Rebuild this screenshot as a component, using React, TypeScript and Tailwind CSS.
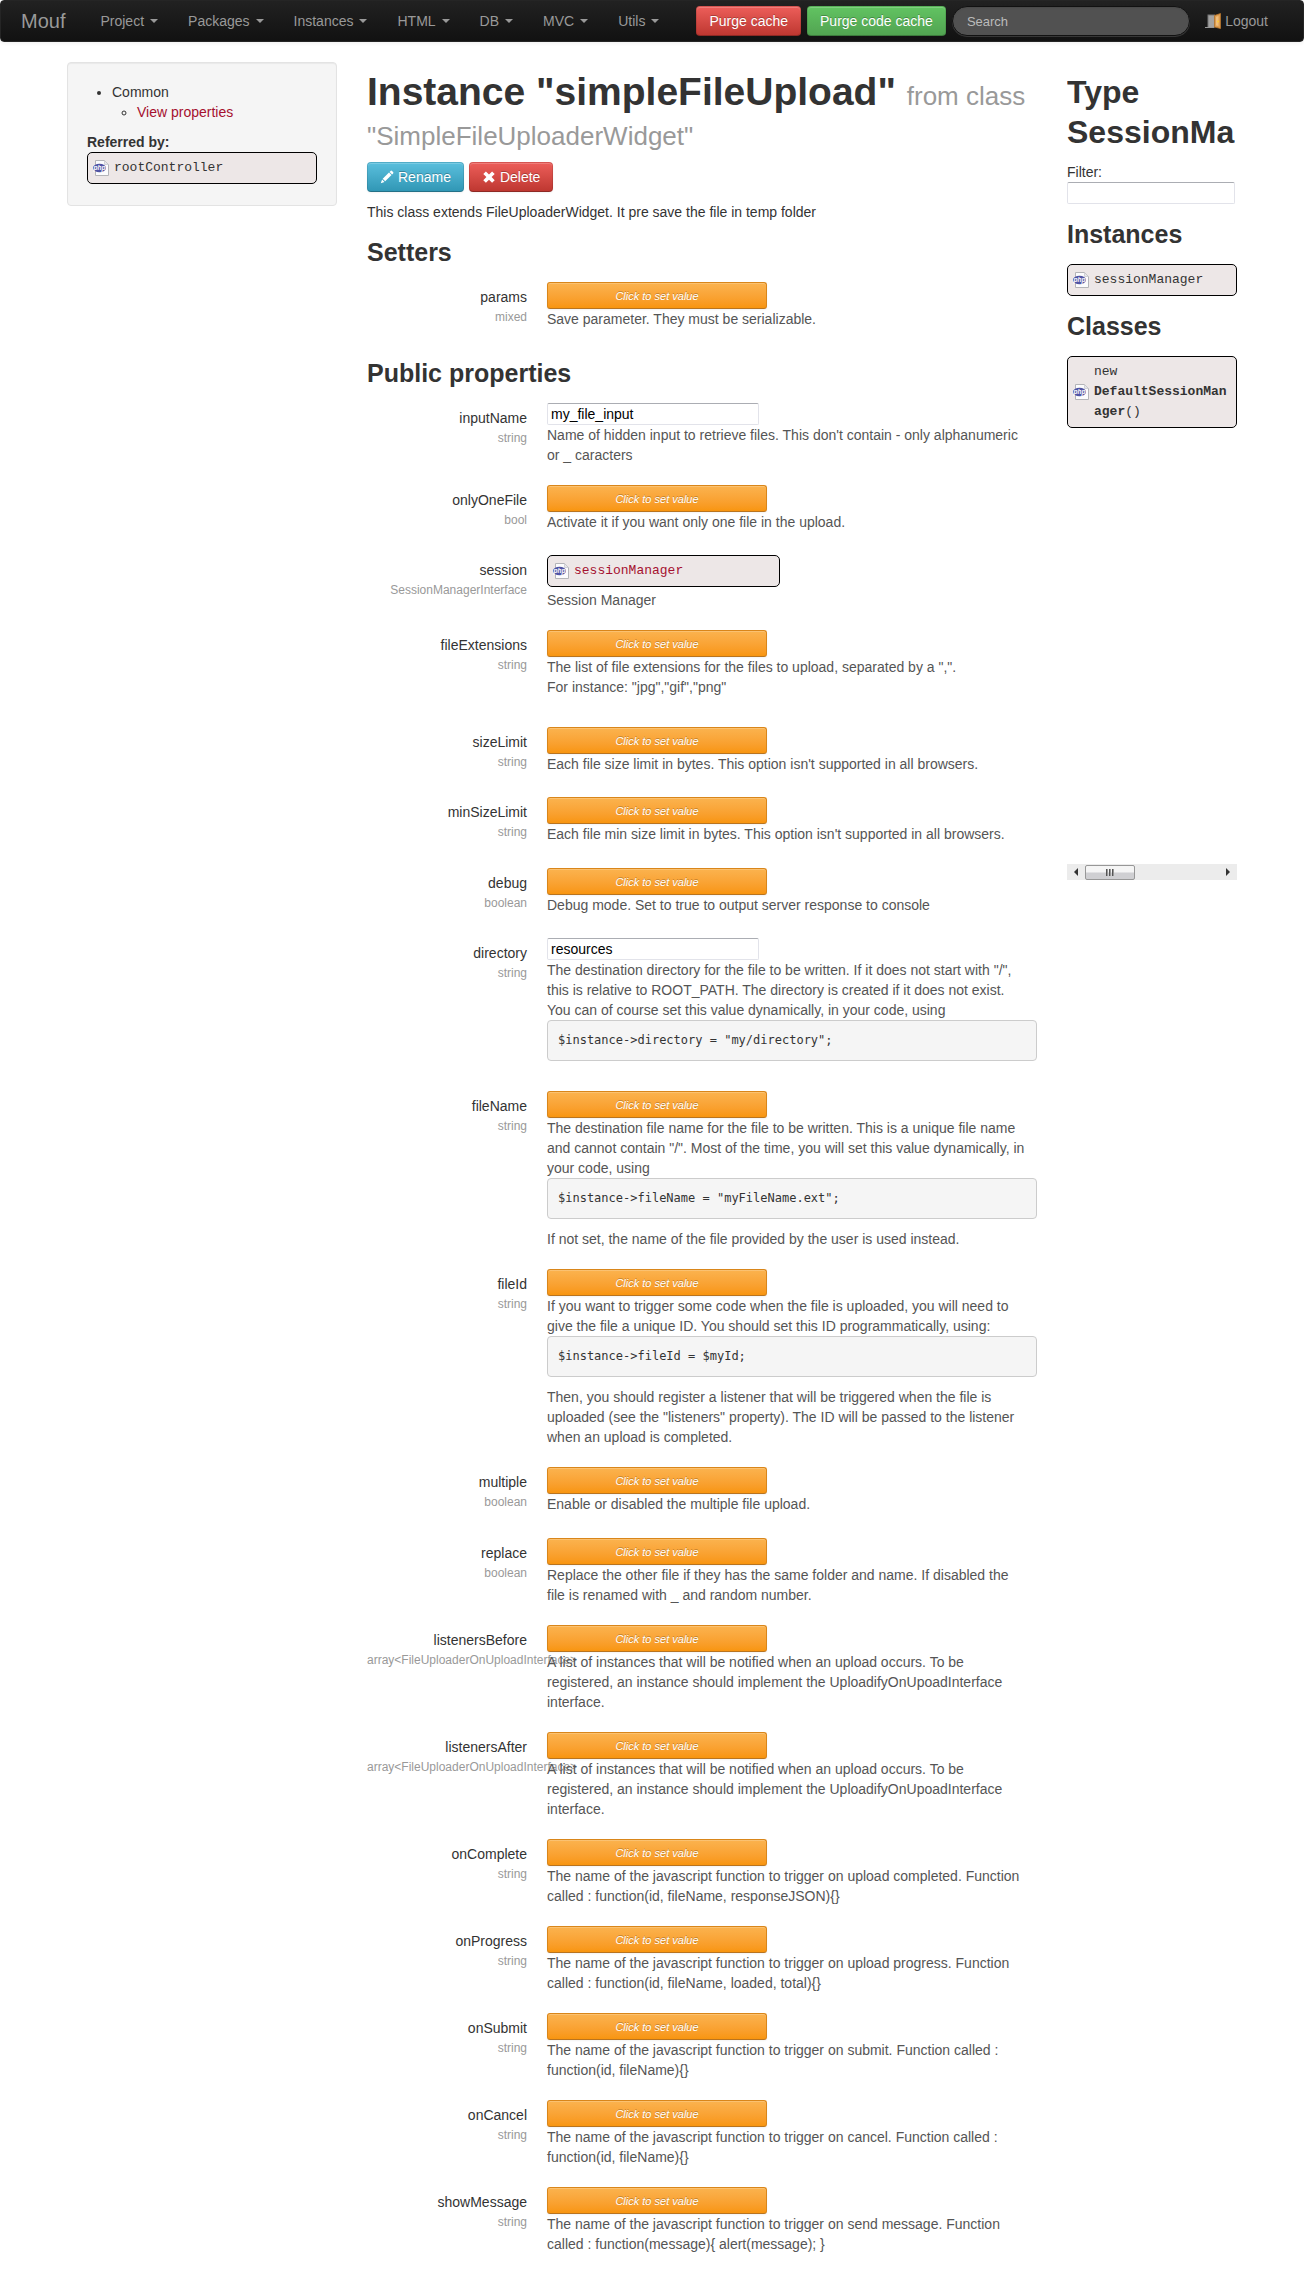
import React from "react";

type Property = {
  name: string;
  type: string;
  value?: string;
  instance?: string;
  roomy?: boolean;
  help: React.ReactNode;
};

const menus = ["Project", "Packages", "Instances", "HTML", "DB", "MVC", "Utils"];

const buttonBase =
  "inline-flex h-[30px] items-center rounded border border-black/10 border-b-black/25 px-3 text-sm leading-5 text-white [text-shadow:0_-1px_0_rgba(0,0,0,0.25)] shadow-[inset_0_1px_0_rgba(255,255,255,0.2),0_1px_2px_rgba(0,0,0,0.05)] bg-clip-border bg-origin-border whitespace-nowrap";

const inputBase =
  "block h-[22px] rounded-[2px] border border-[#e2e3ea] border-t-[#abadb3] bg-white px-[3px] text-sm leading-5 text-black outline-none";

function PhpIcon() {
  return (
    <svg width="16" height="16" viewBox="0 0 16 16" className="shrink-0" aria-hidden="true">
      <path d="M2.5.5h9l4 4v11h-13z" fill="#fcfcfd" stroke="#b4b4b8" />
      <path d="M11.5.5v4h4z" fill="#e6e6ea" stroke="#c4c4c8" strokeWidth=".7" />
      <ellipse cx="6.5" cy="8" rx="6.5" ry="4.2" fill="#5054a4" />
      <text
        x="6.4"
        y="9.8"
        textAnchor="middle"
        fill="#fff"
        fontFamily="Liberation Sans, Arial, sans-serif"
        fontSize="6.5"
        fontStyle="italic"
        fontWeight="bold"
      >
        php
      </text>
    </svg>
  );
}

function PencilIcon() {
  return (
    <svg width="14" height="14" viewBox="0 0 14 14" className="shrink-0" fill="#fff" aria-hidden="true">
      <path d="M10.600.9q.7-.7 1.400 0l1.100 1.100q.7.7 0 1.400l-1 1L9.600 1.900zM9 2.500l2.500 2.500-6.300 6.300L2.700 8.800zM2.100 9.500l2.400 2.400L.800 13.200z" />
    </svg>
  );
}

function RemoveIcon() {
  return (
    <svg width="14" height="14" viewBox="0 0 14 14" className="shrink-0" fill="#fff" aria-hidden="true">
      <path d="M3.900 1.400 7 4.500l3.100-3.100 2.600 2.600L9.600 7.100l3.100 3.100-2.600 2.600L7 9.700l-3.100 3.100-2.600-2.600 3.100-3.100L1.300 4z" />
    </svg>
  );
}

function DoorIcon() {
  return (
    <svg width="16" height="16" viewBox="0 0 16 16" className="shrink-0" aria-hidden="true">
      <path d="M2.500 1.500H10v13H2.500z" fill="#777" />
      <path d="M3.500 2.500H9.500v12h-6z" fill="#a3a3a3" />
      <path d="M0 14.500h9" stroke="#999" />
      <path d="M9.500 2.500 15.500.5v15l-6-1.500z" fill="#dc9c50" stroke="#b5732c" strokeWidth=".8" />
      <path d="M11 3.800 13.500 3v10l-2.500-.600z" fill="#efbd7c" />
      <circle cx="13" cy="8.500" r=".9" fill="#ffcf30" />
    </svg>
  );
}

function InstanceBox({ children, className = "" }: { children: React.ReactNode; className?: string }) {
  return (
    <div
      className={
        "flex items-center gap-[5px] rounded-[5px] border border-black bg-[#ede7e7] py-[5px] pl-[5px] pr-1 font-['Liberation_Mono',monospace] text-[13px] leading-5 " +
        className
      }
    >
      <PhpIcon />
      <span className="min-w-0 wrap-break-word">{children}</span>
    </div>
  );
}

function Code({ children }: { children: string }) {
  return (
    <pre className="-mr-2 mb-2.5 rounded border border-[#ccc] bg-[#f5f5f5] px-2.5 py-2.5 font-['DejaVu_Sans_Mono',monospace] text-[12px] leading-[19px] text-[#333]">
      {children}
    </pre>
  );
}

function PropertyRow({ property }: { property: Property }) {
  const { name, type, value, instance, roomy, help } = property;
  const id = "property-" + name;
  return (
    <div className={"mb-5 flex gap-5 " + (roomy ? "min-h-[51px]" : "min-h-[50px]")}>
      <div className="w-40 shrink-0 pt-[5px] text-right">
        <label htmlFor={id} className="block">
          {name}
        </label>
        <span className="block text-xs leading-5 text-[#999]">{type}</span>
      </div>
      <div className="min-w-0 flex-1">
        {value !== undefined ? (
          <input id={id} type="text" defaultValue={value} className={inputBase + " w-[212px]"} />
        ) : instance ? (
          <InstanceBox className="mb-[3px] w-[233px]">
            <a id={id} href="#session" className="text-[#a5102f]">
              {instance}
            </a>
          </InstanceBox>
        ) : (
          <button
            id={id}
            type="button"
            className="block h-[27px] w-[220px] rounded-[3px] border border-[#d9861a] border-b-[#b9741f] bg-linear-to-b from-[#fbb450] to-[#f89406] bg-origin-border text-[11px] leading-4 text-white italic shadow-[inset_0_1px_0_rgba(255,255,255,0.2),0_1px_2px_rgba(0,0,0,0.05)] [text-shadow:0_-1px_0_rgba(0,0,0,0.25)]"
          >
            Click to set value
          </button>
        )}
        <div className="pr-2 text-[#555]">{help}</div>
      </div>
    </div>
  );
}

const setters: Property[] = [
  { name: "params", type: "mixed", roomy: true, help: "Save parameter. They must be serializable." },
];

const properties: Property[] = [
  {
    name: "inputName",
    type: "string",
    value: "my_file_input",
    help: "Name of hidden input to retrieve files. This don't contain - only alphanumeric or _ caracters",
  },
  { name: "onlyOneFile", type: "bool", help: "Activate it if you want only one file in the upload." },
  { name: "session", type: "SessionManagerInterface", instance: "sessionManager", help: "Session Manager" },
  {
    name: "fileExtensions",
    type: "string",
    help: (
      <p className="mb-2.5">
        The list of file extensions for the files to upload, separated by a ",".
        <br />
        For instance: "jpg","gif","png"
      </p>
    ),
  },
  {
    name: "sizeLimit",
    type: "string",
    help: "Each file size limit in bytes. This option isn't supported in all browsers.",
  },
  {
    name: "minSizeLimit",
    type: "string",
    roomy: true,
    help: "Each file min size limit in bytes. This option isn't supported in all browsers.",
  },
  {
    name: "debug",
    type: "boolean",
    help: "Debug mode. Set to true to output server response to console",
  },
  {
    name: "directory",
    type: "string",
    value: "resources",
    help: (
      <>
        The destination directory for the file to be written. If it does not start with "/", this is
        relative to ROOT_PATH. The directory is created if it does not exist. You can of course set
        this value dynamically, in your code, using
        <Code>{'$instance->directory = "my/directory";'}</Code>
      </>
    ),
  },
  {
    name: "fileName",
    type: "string",
    help: (
      <>
        The destination file name for the file to be written. This is a unique file name and cannot
        contain "/". Most of the time, you will set this value dynamically, in your code, using
        <Code>{'$instance->fileName = "myFileName.ext";'}</Code>
        If not set, the name of the file provided by the user is used instead.
      </>
    ),
  },
  {
    name: "fileId",
    type: "string",
    help: (
      <>
        If you want to trigger some code when the file is uploaded, you will need to give the file a
        unique ID. You should set this ID programmatically, using:
        <Code>{"$instance->fileId = $myId;"}</Code>
        Then, you should register a listener that will be triggered when the file is uploaded (see the
        "listeners" property). The ID will be passed to the listener when an upload is completed.
      </>
    ),
  },
  { name: "multiple", type: "boolean", roomy: true, help: "Enable or disabled the multiple file upload." },
  {
    name: "replace",
    type: "boolean",
    help: "Replace the other file if they has the same folder and name. If disabled the file is renamed with _ and random number.",
  },
  {
    name: "listenersBefore",
    type: "array<FileUploaderOnUploadInterface>",
    help: "A list of instances that will be notified when an upload occurs. To be registered, an instance should implement the UploadifyOnUpoadInterface interface.",
  },
  {
    name: "listenersAfter",
    type: "array<FileUploaderOnUploadInterface>",
    help: "A list of instances that will be notified when an upload occurs. To be registered, an instance should implement the UploadifyOnUpoadInterface interface.",
  },
  {
    name: "onComplete",
    type: "string",
    help: "The name of the javascript function to trigger on upload completed. Function called : function(id, fileName, responseJSON){}",
  },
  {
    name: "onProgress",
    type: "string",
    help: "The name of the javascript function to trigger on upload progress. Function called : function(id, fileName, loaded, total){}",
  },
  {
    name: "onSubmit",
    type: "string",
    help: "The name of the javascript function to trigger on submit. Function called : function(id, fileName){}",
  },
  {
    name: "onCancel",
    type: "string",
    help: "The name of the javascript function to trigger on cancel. Function called : function(id, fileName){}",
  },
  {
    name: "showMessage",
    type: "string",
    help: "The name of the javascript function to trigger on send message. Function called : function(message){ alert(message); }",
  },
];

function Navbar() {
  return (
    <header className="flex h-[42px] items-center rounded border border-[#252525] bg-linear-to-b from-[#222] to-[#111] bg-origin-border pl-5 pr-[35px] text-[#999] shadow-[0_1px_4px_rgba(0,0,0,0.067)]">
      <a href="#home" className="pr-5 text-xl leading-5">
        Mouf
      </a>
      <nav className="flex">
        {menus.map((menu) => (
          <a key={menu} href={"#" + menu.toLowerCase()} className="flex items-center gap-1.5 px-[15px]">
            {menu}
            <span className="border-x-4 border-t-4 border-x-transparent border-t-[#999]" />
          </a>
        ))}
      </nav>
      <button type="button" className={buttonBase + " ml-[22px] bg-linear-to-b from-[#ee5f5b] to-[#bd362f]"}>
        Purge cache
      </button>
      <button type="button" className={buttonBase + " ml-1.5 bg-linear-to-b from-[#62c462] to-[#51a351]"}>
        Purge code cache
      </button>
      <input
        type="search"
        aria-label="Search"
        placeholder="Search"
        className="ml-1.5 h-[30px] min-w-0 flex-1 rounded-full border border-[#111] bg-[#515151] px-3.5 text-[13px] text-white shadow-[inset_0_1px_2px_rgba(0,0,0,0.1),0_1px_0_rgba(255,255,255,0.15)] outline-none placeholder:text-[#bbb]"
      />
      <a href="#logout" className="ml-[15px] flex items-center gap-1">
        <DoorIcon />
        Logout
      </a>
    </header>
  );
}

function Scrollbar() {
  return (
    <div className="flex h-4 items-center bg-[#ececec]">
      <button type="button" aria-label="Scroll left" className="flex h-4 w-[18px] items-center justify-center">
        <span className="border-y-4 border-r-4 border-y-transparent border-r-[#333]" />
      </button>
      <div className="flex h-[15px] w-[50px] items-center justify-center gap-px rounded-[2px] border border-[#979797] bg-linear-to-b from-[#f5f5f5] from-45% to-[#cfcfd2] to-55%">
        <span className="h-[7px] w-0.5 border-r border-[#999] bg-[#555]" />
        <span className="h-[7px] w-0.5 border-r border-[#999] bg-[#555]" />
        <span className="h-[7px] w-0.5 border-r border-[#999] bg-[#555]" />
      </div>
      <button type="button" aria-label="Scroll right" className="ml-auto flex h-4 w-[18px] items-center justify-center">
        <span className="border-y-4 border-l-4 border-y-transparent border-l-[#333]" />
      </button>
    </div>
  );
}

export default function App() {
  return (
    <div className="bg-white font-['Liberation_Sans',Arial,sans-serif] text-sm leading-5 text-[#333]">
      <Navbar />
      <div className="mx-auto flex max-w-[1170px] items-start gap-[30px] pt-5 pb-2.5">
        <aside className="w-[270px] shrink-0 rounded border border-[#e3e3e3] bg-[#f5f5f5] px-[19px] pt-[19px] pb-[21px] shadow-[inset_0_1px_1px_rgba(0,0,0,0.05)]">
          <ul className="mb-2.5 ml-[25px] list-disc">
            <li>
              Common
              <ul className="ml-[25px] list-[circle]">
                <li>
                  <a href="#properties" className="text-[#a5102f]">
                    View properties
                  </a>
                </li>
              </ul>
            </li>
          </ul>
          <b className="block">Referred by:</b>
          <InstanceBox>rootController</InstanceBox>
        </aside>

        <main className="min-w-0 flex-1">
          <h1 className="my-2.5 text-[39px] leading-10 font-bold">
            Instance "simpleFileUpload"{" "}
            <small className="text-[26px] leading-5 font-normal text-[#999]">
              from class "SimpleFileUploaderWidget"
            </small>
          </h1>
          <div className="flex gap-[5px]">
            <button type="button" className={buttonBase + " gap-1 bg-linear-to-b from-[#5bc0de] to-[#2f96b4]"}>
              <PencilIcon />
              Rename
            </button>
            <button type="button" className={buttonBase + " gap-1 bg-linear-to-b from-[#ee5f5b] to-[#bd362f]"}>
              <RemoveIcon />
              Delete
            </button>
          </div>
          <p className="my-2.5">This class extends FileUploaderWidget. It pre save the file in temp folder</p>

          <h2 className="mb-2.5 text-[25px] leading-10 font-bold">Setters</h2>
          {setters.map((property) => (
            <PropertyRow key={property.name} property={property} />
          ))}

          <h2 className="mb-2.5 text-[25px] leading-10 font-bold">Public properties</h2>
          {properties.map((property) => (
            <PropertyRow key={property.name} property={property} />
          ))}
        </main>

        <aside className="w-[170px] shrink-0">
          <div className="h-[802px] overflow-hidden">
            <h2 className="my-2.5 w-[168px] overflow-hidden text-[32px] leading-10 font-bold">
              Type SessionMa
            </h2>
            <label htmlFor="filter" className="block">
              Filter:
            </label>
            <input id="filter" type="text" className={inputBase + " w-[168px]"} />
            <h3 className="my-2.5 text-[25px] leading-10 font-bold">Instances</h3>
            <InstanceBox>sessionManager</InstanceBox>
            <h3 className="my-2.5 text-[25px] leading-10 font-bold">Classes</h3>
            <InstanceBox>
              new <b>DefaultSessionManager</b>()
            </InstanceBox>
          </div>
          <Scrollbar />
        </aside>
      </div>
    </div>
  );
}
